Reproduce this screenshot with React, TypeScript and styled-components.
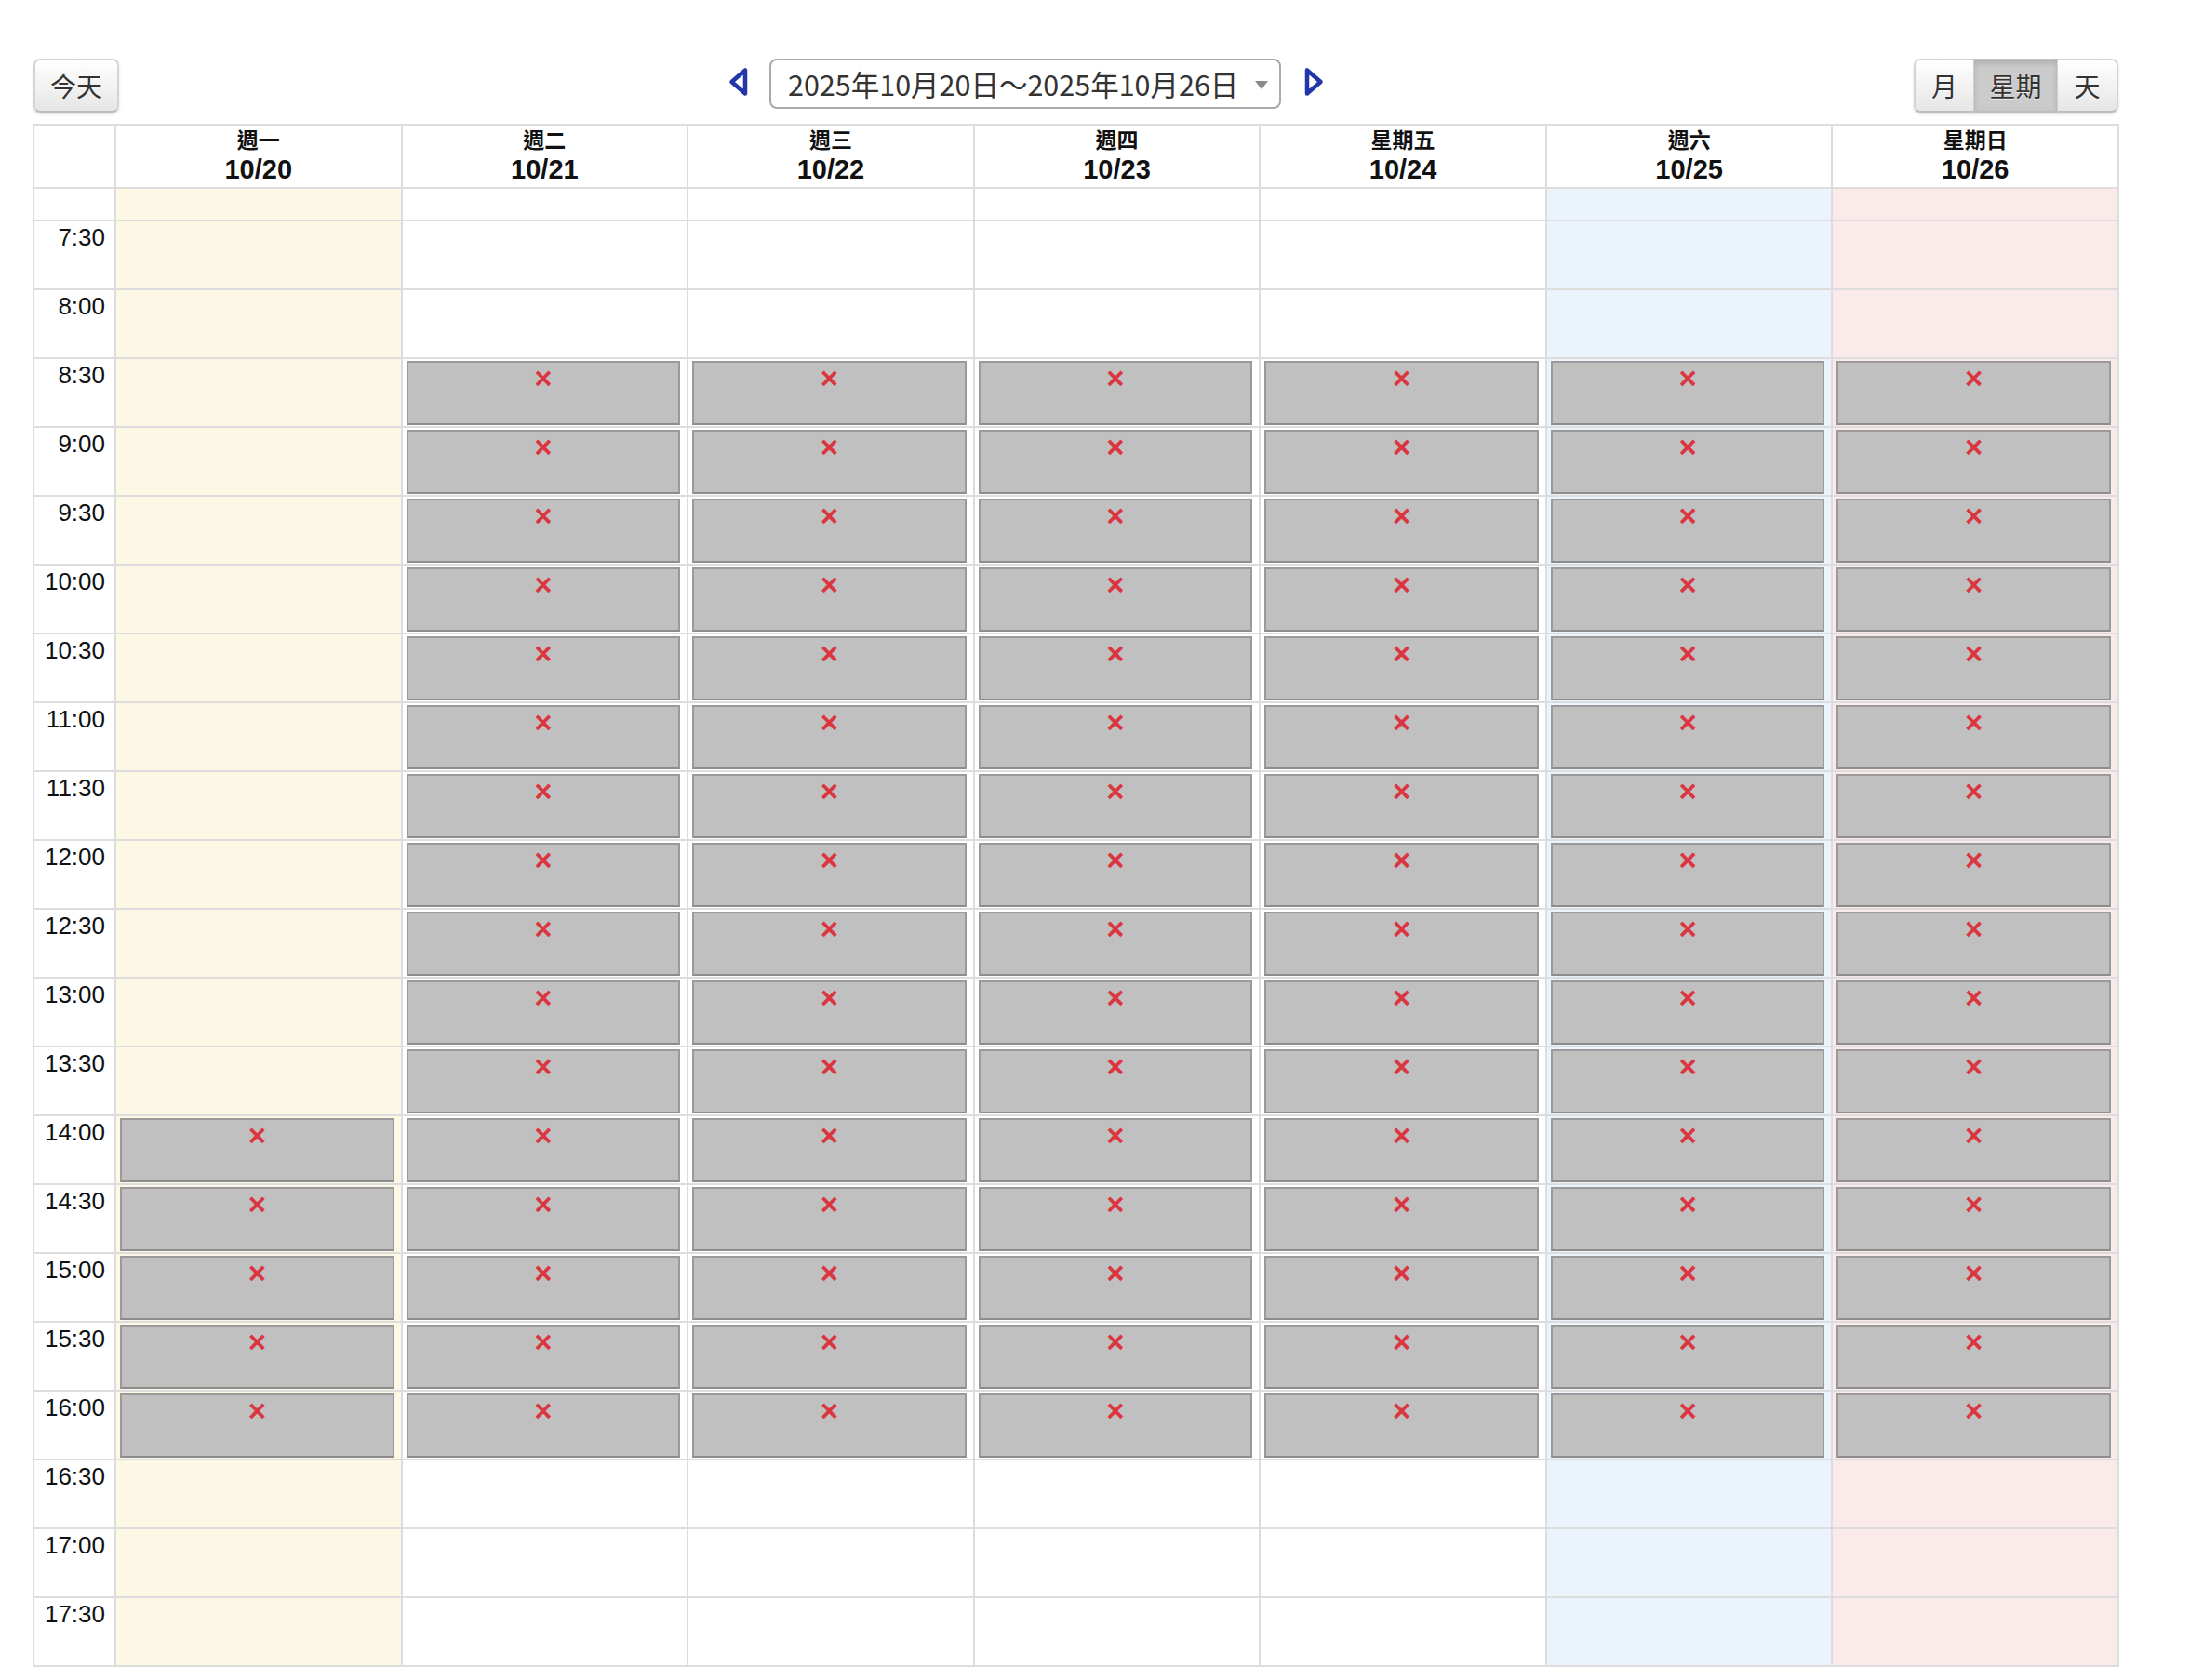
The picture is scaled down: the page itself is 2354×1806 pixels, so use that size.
import React from "react";
import styled, { createGlobalStyle, css } from "styled-components";

const GlobalStyle = createGlobalStyle`
  html, body { margin: 0; padding: 0; background: #ffffff; }
  body { font-family: "Noto Sans CJK TC", "Noto Sans CJK JP", sans-serif; color: #222; }
`;

const Page = styled.div`
  padding: 63px 0 0 35px;
  width: 2243px;
`;

const Toolbar = styled.div`
  display: flex;
  justify-content: space-between;
  align-items: flex-start;
  padding: 0 1px;
  margin-bottom: 12px;
`;

const buttonFace = css`
  height: 58px;
  box-sizing: border-box;
  padding: 0 16px;
  display: flex;
  align-items: center;
  justify-content: center;
  white-space: nowrap;
  font-family: "Noto Sans CJK TC", "Noto Sans CJK JP", sans-serif;
  font-size: 28px;
  line-height: 34px;
  color: #333;
  text-shadow: 0 1px 1px rgba(255, 255, 255, 0.75);
  background: linear-gradient(#ffffff, #e6e6e6);
  border: 2px solid #d4d4d4;
  border-bottom-color: #bdbdbd;
  box-shadow: 0 2px 3px rgba(0, 0, 0, 0.12);
`;

const TodayButton = styled.div`
  ${buttonFace};
  width: 92px;
  padding: 0;
  border-radius: 7px;
`;

const Center = styled.div`
  display: flex;
  align-items: flex-start;
  margin-left: 21px;
`;

const ArrowButton = styled.div<{ $side: "left" | "right" }>`
  width: 24px;
  height: 34px;
  margin-top: 8px;
  ${(p) => (p.$side === "left" ? "margin-right: 21px;" : "margin-left: 23px;")}
  display: flex;
`;

const DateSelect = styled.div`
  width: 550px;
  height: 54px;
  box-sizing: border-box;
  border: 2px solid #aaaaaa;
  border-radius: 8px;
  background: #fff;
  display: flex;
  align-items: center;
  padding: 0 12px 0 18px;
  font-size: 30.5px;
  line-height: 36px;
  color: #333;
  white-space: nowrap;
`;

const Caret = styled.span`
  margin-left: auto;
  width: 0;
  height: 0;
  border-left: 7px solid transparent;
  border-right: 7px solid transparent;
  border-top: 9px solid #8a8a8a;
  margin-top: 2px;
`;

const ViewGroup = styled.div`
  display: flex;
  border-radius: 7px;
  box-shadow: 0 2px 3px rgba(0, 0, 0, 0.12);
`;

const ViewButton = styled.div<{ $active?: boolean; $pos: "first" | "mid" | "last"; $w: number }>`
  ${buttonFace};
  padding: 0;
  width: ${(p) => p.$w}px;
  box-shadow: none;
  ${(p) => p.$pos === "first" && "border-radius: 7px 0 0 7px; border-right: none;"}
  ${(p) => p.$pos === "mid" && "border-radius: 0; border-left: 1px solid #cfcfcf; border-right: 1px solid #cfcfcf;"}
  ${(p) => p.$pos === "last" && "border-radius: 0 7px 7px 0; border-left: none;"}
  ${(p) =>
    p.$active &&
    css`
      background: #cbcbcb;
      box-shadow: inset 0 3px 6px rgba(0, 0, 0, 0.15);
      border-top-color: #c2c2c2;
    `}
`;

const Grid = styled.div`
  display: grid;
  grid-template-columns: 86px repeat(7, 1fr);
  grid-template-rows: 66px 33px repeat(21, 72px);
  gap: 2px;
  padding: 2px;
  background: #dddddd;
`;

const Corner = styled.div`
  background: #fff;
`;

const HeaderCell = styled.div`
  background: #fff;
  display: flex;
  flex-direction: column;
  align-items: center;
  color: #111;
  font-weight: 700;
`;

const DayName = styled.div`
  font-size: 23px;
  line-height: 33px;
  margin-top: -2px;
`;

const DayDate = styled.div`
  font-family: "Liberation Sans", sans-serif;
  font-size: 29px;
  line-height: 32px;
`;

const TimeCell = styled.div`
  background: #fff;
  text-align: right;
  padding: 3px 10px 0 0;
  font-family: "Liberation Sans", sans-serif;
  font-size: 26px;
  line-height: 29px;
  color: #111;
`;

type Tone = "plain" | "today" | "sat" | "sun";

const toneBg: Record<Tone, string> = {
  plain: "#ffffff",
  today: "#fcf8e5",
  sat: "#ebf3fd",
  sun: "#fbeaea",
};

const DayCell = styled.div<{ $tone: Tone }>`
  background: ${(p) => toneBg[p.$tone]};
  display: flex;
  flex-direction: column;
  padding: 2px 7px 1px 4px;
`;

const Block = styled.div`
  flex: 1;
  box-sizing: border-box;
  background: #c0c0c0;
  border: 2px solid #9a9a9a;
  border-bottom-color: #8c8c8c;
  display: flex;
  justify-content: center;
  align-items: flex-start;
`;

const Mark = styled.span`
  font-family: "Liberation Sans", sans-serif;
  font-weight: 700;
  font-size: 33px;
  line-height: 34px;
  color: #db3540;
`;

const days: { name: string; date: string; tone: Tone; from: number }[] = [
  { name: "週一", date: "10/20", tone: "today", from: 13 },
  { name: "週二", date: "10/21", tone: "plain", from: 2 },
  { name: "週三", date: "10/22", tone: "plain", from: 2 },
  { name: "週四", date: "10/23", tone: "plain", from: 2 },
  { name: "星期五", date: "10/24", tone: "plain", from: 2 },
  { name: "週六", date: "10/25", tone: "sat", from: 2 },
  { name: "星期日", date: "10/26", tone: "sun", from: 2 },
];

const times: string[] = [];
for (let h = 7; h <= 17; h++) {
  if (h > 7) times.push(`${h}:00`);
  times.push(`${h}:30`);
}

const LEFT_ARROW = "19,4.5 19,29.5 4.5,17";
const RIGHT_ARROW = "5,4.5 5,29.5 19.5,17";

function Arrow({ side }: { side: "left" | "right" }) {
  return (
    <ArrowButton $side={side}>
      <svg width="24" height="34" viewBox="0 0 24 34">
        <polygon
          points={side === "left" ? LEFT_ARROW : RIGHT_ARROW}
          fill="none"
          stroke="#2236aa"
          strokeWidth="4.5"
          strokeLinejoin="round"
        />
      </svg>
    </ArrowButton>
  );
}

export default function App() {
  return (
    <>
      <GlobalStyle />
      <Page>
        <Toolbar>
          <TodayButton>今天</TodayButton>
          <Center>
            <Arrow side="left" />
            <DateSelect>
              <span>2025年10月20日～2025年10月26日</span>
              <Caret />
            </DateSelect>
            <Arrow side="right" />
          </Center>
          <ViewGroup>
            <ViewButton $pos="first" $w={64}>
              月
            </ViewButton>
            <ViewButton $pos="mid" $w={91} $active>
              星期
            </ViewButton>
            <ViewButton $pos="last" $w={65}>
              天
            </ViewButton>
          </ViewGroup>
        </Toolbar>
        <Grid>
          <Corner />
          {days.map((d) => (
            <HeaderCell key={d.date}>
              <DayName>{d.name}</DayName>
              <DayDate>{d.date}</DayDate>
            </HeaderCell>
          ))}
          <Corner />
          {days.map((d) => (
            <DayCell key={"blank" + d.date} $tone={d.tone} />
          ))}
          {times.map((t, ri) => (
            <React.Fragment key={t}>
              <TimeCell>{t}</TimeCell>
              {days.map((d) => (
                <DayCell key={d.date + t} $tone={d.tone}>
                  {ri >= d.from && ri <= 17 && (
                    <Block>
                      <Mark>×</Mark>
                    </Block>
                  )}
                </DayCell>
              ))}
            </React.Fragment>
          ))}
        </Grid>
      </Page>
    </>
  );
}
